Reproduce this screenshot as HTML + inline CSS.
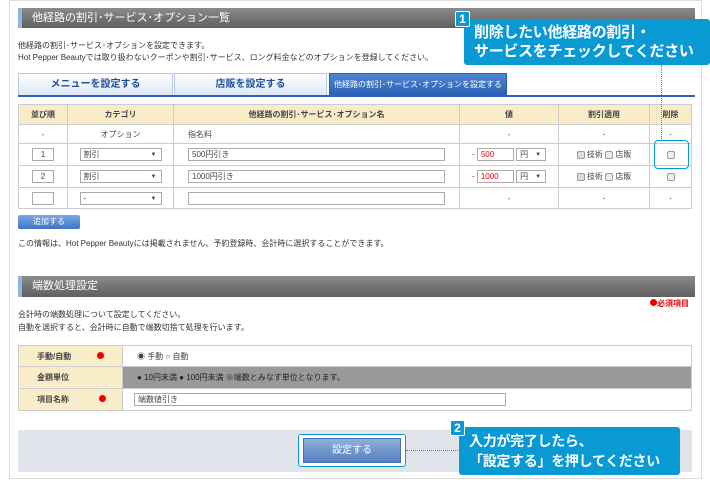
<!DOCTYPE html>
<html><head><meta charset="utf-8"><style>
*{margin:0;padding:0;box-sizing:border-box}
body{width:710px;height:480px;background:#fff;position:relative;overflow:hidden;font-family:"Liberation Sans","Noto Sans CJK JP",sans-serif;font-size:8px;color:#333}
.a{position:absolute}
.bar{background:linear-gradient(#8a8a8a,#5f5f5f);border-left:4px solid #8fb6e0;color:#fff;font-size:11px;padding-left:10px;line-height:20px}
.tab{position:absolute;top:73px;height:23px;border:1px solid #b7c9e0;background:linear-gradient(#fff,#dde9f7);color:#1f4f9a;font-weight:bold;font-size:10px;text-align:center;line-height:22px}
table{border-collapse:collapse;position:absolute}
td{border:1px solid #ccc;text-align:center;font-size:8px;color:#444}
.th td{background:#f8ecc9;font-weight:bold;height:20px}
.inp{display:inline-block;border:1px solid #aaa;height:13px;background:#fff;text-align:left;padding-left:3px;line-height:12px;font-size:8px;vertical-align:middle}
.sel{display:inline-block;border:1px solid #aaa;height:13px;background:#fff;text-align:left;padding-left:3px;line-height:12px;position:relative;vertical-align:middle}
.sel:after{content:"▼";position:absolute;right:4px;font-size:6px}
.cb{display:inline-block;width:8px;height:8px;border:1px solid #999;border-radius:2px;background:#eee;vertical-align:middle}
.call{background:#0a9ad3;color:#fff;font-weight:bold;font-size:15px;line-height:19px;border-radius:3px;white-space:nowrap;letter-spacing:-0.3px}
.badge{background:#0a9ad3;color:#fff;border:1.5px solid #fff;font-weight:bold;font-size:12px;text-align:center;line-height:14px;border-radius:2px}
.lbl{background:#f8ecc9;text-align:left;padding-left:18px;font-weight:bold}
.dot{display:inline-block;width:7px;height:7px;border-radius:50%;background:#e00}
</style></head><body>
<div class="a" style="left:9px;top:0;width:693px;height:479px;border:1px solid #ddd"></div>
<div class="a bar" style="left:18px;top:8px;width:677px;height:20px">他経路の割引･サービス･オプション一覧</div>
<div class="a" style="left:18px;top:40px;line-height:12px">他経路の割引･サービス･オプションを設定できます。<br>Hot Pepper Beautyでは取り扱わないクーポンや割引･サービス、ロング料金などのオプションを登録してください。</div>
<div class="tab" style="left:18px;width:155px">メニューを設定する</div>
<div class="tab" style="left:174px;width:153px">店販を設定する</div>
<div class="tab" style="left:329px;width:178px;background:linear-gradient(#4f86d0,#2a61b5);color:#fff;font-weight:normal;font-size:8px;border-color:#2a61b5">他経路の割引･サービス･オプションを設定する</div>
<div class="a" style="left:18px;top:95px;width:677px;height:2px;background:#2a61b5"></div>
<table style="left:18px;top:104px;width:674px">
<tr class="th"><td style="width:49px">並び順</td><td style="width:106px">カテゴリ</td><td style="width:286px">他経路の割引･サービス･オプション名</td><td style="width:99px">値</td><td style="width:91px">割引適用</td><td>削除</td></tr>
<tr style="height:19px"><td>-</td><td>オプション</td><td style="text-align:left;padding-left:14px">指名料</td><td>-</td><td>-</td><td>-</td></tr>
<tr style="height:22px"><td><span class="inp" style="width:22px;text-align:center;padding:0">1</span></td><td><span class="sel" style="width:82px">割引</span></td><td><span class="inp" style="width:257px">500円引き</span></td><td><span style="color:#e00">- </span><span class="inp" style="width:37px;color:#e00">500</span> <span class="sel" style="width:30px">円</span></td><td><span class="cb" style="background:#ddd"></span> 技術 <span class="cb"></span> 店販</td><td><span class="cb"></span></td></tr>
<tr style="height:22px"><td><span class="inp" style="width:22px;text-align:center;padding:0">2</span></td><td><span class="sel" style="width:82px">割引</span></td><td><span class="inp" style="width:257px">1000円引き</span></td><td><span style="color:#e00">- </span><span class="inp" style="width:37px;color:#e00">1000</span> <span class="sel" style="width:30px">円</span></td><td><span class="cb" style="background:#ddd"></span> 技術 <span class="cb"></span> 店販</td><td><span class="cb"></span></td></tr>
<tr style="height:21px"><td><span class="inp" style="width:22px"></span></td><td><span class="sel" style="width:82px">-</span></td><td><span class="inp" style="width:257px"></span></td><td>-</td><td>-</td><td>-</td></tr>
</table>
<div class="a" style="left:18px;top:215px;width:62px;height:14px;background:linear-gradient(#7aa8e0,#3e74c4);color:#fff;text-align:center;line-height:14px;border-radius:2px">追加する</div>
<div class="a" style="left:18px;top:238px">この情報は、Hot Pepper Beautyには掲載されません、予約登録時、会計時に選択することができます。</div>
<div class="a bar" style="left:18px;top:276px;width:677px;height:21px;line-height:21px">端数処理設定</div>
<div class="a" style="left:650px;top:298px;color:#e00;font-weight:bold"><span class="dot"></span>必須項目</div>
<div class="a" style="left:18px;top:308px;line-height:13px">会計時の端数処理について設定してください。<br>自動を選択すると、会計時に自動で端数切捨て処理を行います。</div>
<table style="left:18px;top:345px;width:674px">
<tr style="height:21px"><td class="lbl" style="width:104px">手動/自動 <span class="dot" style="margin-left:24px"></span></td><td style="text-align:left;padding-left:14px">◉ 手動 ○ 自動</td></tr>
<tr style="height:22px"><td class="lbl">金額単位</td><td style="text-align:left;padding-left:14px;background:#999;color:#222">● 10円未満 ● 100円未満 ※端数とみなす単位となります。</td></tr>
<tr style="height:22px"><td class="lbl">項目名称 <span class="dot" style="margin-left:28px"></span></td><td style="text-align:left;padding-left:11px"><span class="inp" style="width:372px">端数値引き</span></td></tr>
</table>
<div class="a" style="left:18px;top:430px;width:674px;height:42px;background:#e1e4ea"></div>
<div class="a" style="left:298px;top:434px;width:108px;height:33px;border:1.5px solid #0a9ad3;border-radius:3px;background:#fff"></div>
<div class="a" style="left:303px;top:438px;width:98px;height:25px;background:linear-gradient(#8fb0dc,#5580c0);border:1px solid #4a70b0;color:#fff;text-align:center;line-height:23px;font-size:10px">設定する</div>
<div class="a" style="left:406px;top:450px;width:54px;border-top:1.5px dotted #0a9ad3"></div>
<div class="a call" style="left:459px;top:427px;width:221px;height:48px;padding:4px 0 0 10px;font-size:14px;line-height:20px">入力が完了したら、<br>「設定する」を押してください</div>
<div class="a badge" style="left:450px;top:420px;width:15px;height:16px">2</div>
<div class="a call" style="left:464px;top:19px;width:246px;height:46px;padding:4px 0 0 10px">削除したい他経路の割引・<br>サービスをチェックしてください</div>
<div class="a badge" style="left:455px;top:11px;width:15px;height:16px">1</div>
<div class="a" style="left:661px;top:65px;height:76px;border-left:1.5px dotted #0a9ad3"></div>
<div class="a" style="left:654px;top:140px;width:35px;height:29px;border:1.5px solid #0a9ad3;border-radius:4px"></div>
</body></html>
